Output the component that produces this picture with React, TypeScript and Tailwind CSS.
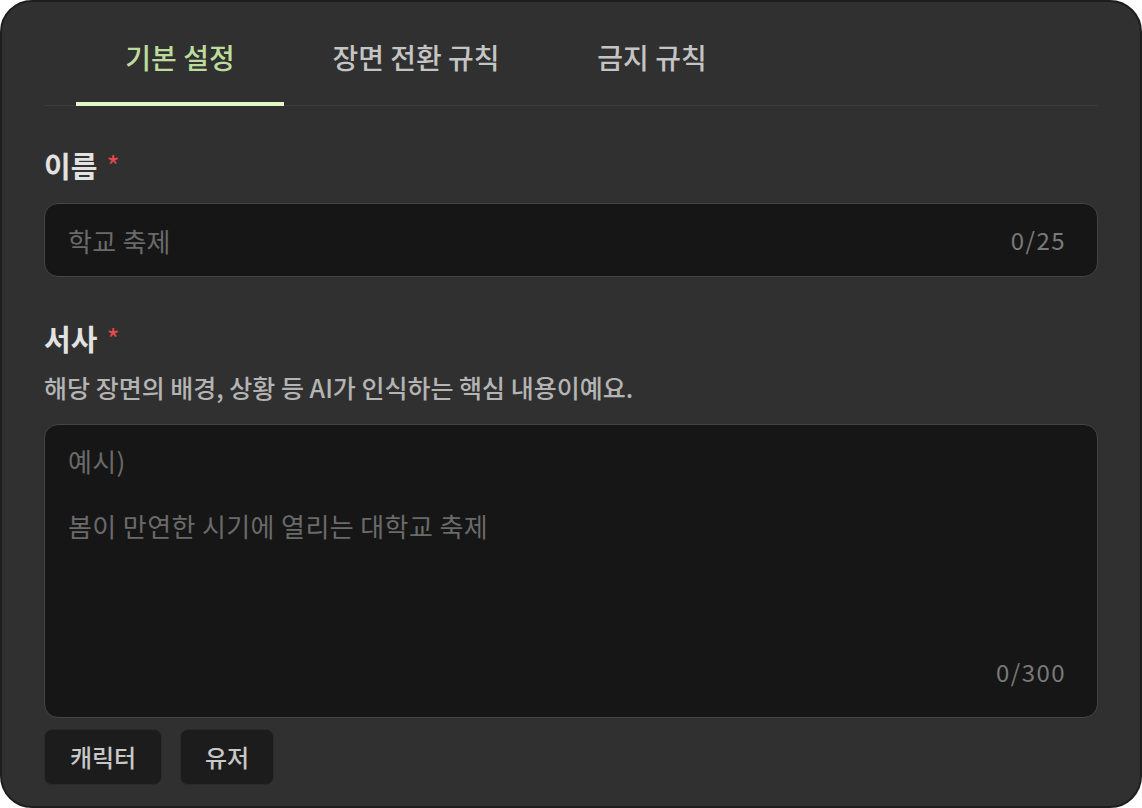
import { useState } from "react";

const tabs = ["기본 설정", "장면 전환 규칙", "금지 규칙"];

export default function App() {
  const [active, setActive] = useState(0);
  const font = { fontFamily: '"Noto Sans CJK KR", "Noto Sans", sans-serif' };

  return (
    <div className="w-[1142px] h-[808px] bg-white" style={font}>
      <div className="h-full w-full rounded-[32px] border-2 border-[#1e1e1e] bg-[#303030] px-[42px] flex flex-col">
        <div className="flex gap-7 pl-8 border-b border-[#3c3c3c] mt-[26px]">
          {tabs.map((t, i) => (
            <button
              key={t}
              onClick={() => setActive(i)}
              className={
                "w-[208px] h-[78px] pt-[11px] flex justify-center items-start text-[28px] leading-[36px] font-medium border-b-4 -mb-px " +
                (active === i
                  ? "text-[#bcdc9d] border-[#e2f6c7]"
                  : "text-[#c4c4c4] border-transparent")
              }
            >
              {t}
            </button>
          ))}
        </div>

        <div className="mt-[39px] flex items-start gap-[9px] h-[40px]">
          <span className="text-[29px] font-semibold text-[#e2e2e2] leading-[40px]">이름</span>
          <span className="text-[28px] text-[#e5484d] leading-[40px]">*</span>
        </div>
        <div className="mt-[18px] h-[74px] rounded-[14px] border border-[#454545] bg-[#161616] flex items-center justify-between pl-[23px] pr-[31px]">
          <span className="text-[26px] text-[#6a6a6a] tracking-[0.01em]">학교 축제</span>
          <span className="text-[24px] text-[#797979] tracking-[0.06em]">0/25</span>
        </div>

        <div className="mt-[41px] flex items-start gap-[9px] h-[40px]">
          <span className="text-[29px] font-semibold text-[#e2e2e2] leading-[40px]">서사</span>
          <span className="text-[28px] text-[#e5484d] leading-[40px]">*</span>
        </div>
        <p className="mt-[13px] text-[25px] font-medium text-[#b4b4b4] leading-[32px]">
          해당 장면의 배경, 상황 등 AI가 인식하는 핵심 내용이예요.
        </p>
        <div className="mt-[21px] h-[294px] rounded-[14px] border border-[#454545] bg-[#161616] flex flex-col justify-between pl-[23px] pr-[31px] pt-[18px] pb-[29px]">
          <div className="text-[26px] text-[#6a6a6a] leading-[36px] tracking-[0.015em]">
            <div>예시)</div>
            <div className="mt-[29px]">봄이 만연한 시기에 열리는 대학교 축제</div>
          </div>
          <div className="self-end text-[24px] text-[#797979] leading-[32px] tracking-[0.06em]">0/300</div>
        </div>

        <div className="mt-[11px] flex gap-[18px]">
          <button className="h-[56px] w-[118px] rounded-[8px] border border-[#2a2a2a] bg-[#1c1c1c] text-[24px] font-medium text-[#c8c8c8]">
            캐릭터
          </button>
          <button className="h-[56px] w-[94px] rounded-[8px] border border-[#2a2a2a] bg-[#1c1c1c] text-[24px] font-medium text-[#c8c8c8]">
            유저
          </button>
        </div>
      </div>
    </div>
  );
}
